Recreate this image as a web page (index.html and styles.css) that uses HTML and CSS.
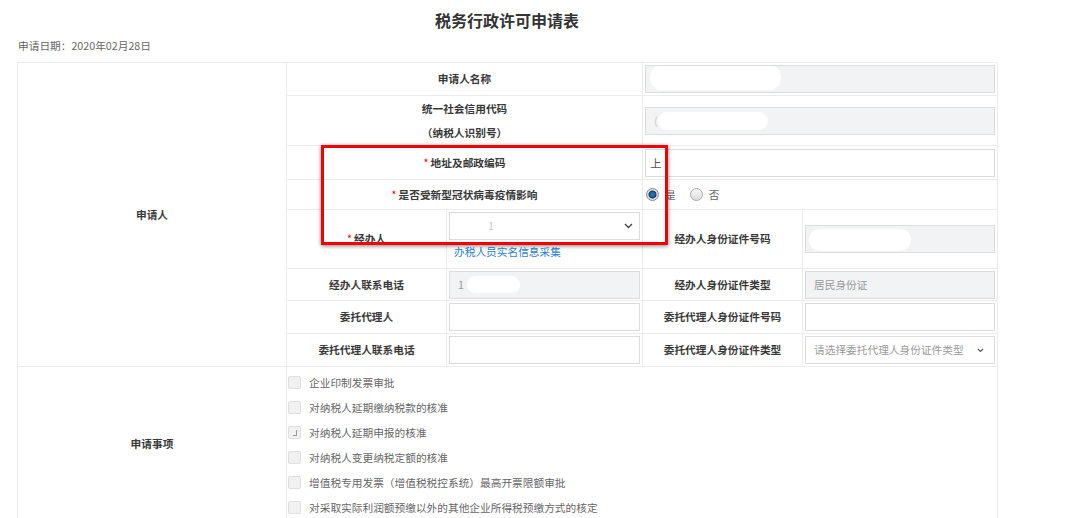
FILE: index.html
```html
<!DOCTYPE html>
<html lang="zh-CN">
<head>
  <meta charset="UTF-8" />
  <title>税务行政许可申请表</title>
  <link rel="stylesheet" href="styles.css">
</head>
<body>

  <div class="page">
    <h1 class="title">税务行政许可申请表</h1>
    <div class="apply-date">申请日期：2020年02月28日</div>

    <div class="form-wrap">
      <table class="form-table">
        <colgroup>
          <col class="c1"><col class="c2"><col class="c3"><col class="c4"><col class="c5">
        </colgroup>

        <!-- 申请人 -->
        <tr class="r1">
          <td class="group" rowspan="8">申请人</td>
          <td class="label" colspan="2">申请人名称</td>
          <td class="field" colspan="2">
            <div class="input readonly"><span class="mask mask-name"></span></div>
          </td>
        </tr>
        <tr class="r2">
          <td class="label two-line" colspan="2">统一社会信用代码<br>（纳税人识别号）</td>
          <td class="field" colspan="2">
            <div class="input readonly"><span class="faint">(</span><span class="mask mask-code"></span></div>
          </td>
        </tr>
        <tr class="r3">
          <td class="label" colspan="2"><span class="req">*</span>地址及邮政编码</td>
          <td class="field" colspan="2">
            <div class="input tight"><span class="value">上</span></div>
          </td>
        </tr>
        <tr class="r4">
          <td class="label" colspan="2"><span class="req">*</span>是否受新型冠状病毒疫情影响</td>
          <td class="field" colspan="2">
            <div class="radio-group">
              <span class="radio on"></span><span class="radio-text">是</span>
              <span class="radio"></span><span class="radio-text">否</span>
            </div>
          </td>
        </tr>
        <tr class="r5">
          <td class="label"><span class="req">*</span>经办人</td>
          <td class="field top">
            <div class="input select"><span class="faint pick">1</span><svg class="chevron" width="9" height="6" viewBox="0 0 9 6"><polyline points="1,1 4.5,4.5 8,1" fill="none" stroke="#444" stroke-width="1.3"/></svg></div>
            <a class="link" href="#">办税人员实名信息采集</a>
          </td>
          <td class="label">经办人身份证件号码</td>
          <td class="field">
            <div class="input readonly"><span class="mask mask-id"></span></div>
          </td>
        </tr>
        <tr class="r6">
          <td class="label">经办人联系电话</td>
          <td class="field">
            <div class="input readonly">1<span class="mask mask-phone"></span></div>
          </td>
          <td class="label">经办人身份证件类型</td>
          <td class="field">
            <div class="input readonly">居民身份证</div>
          </td>
        </tr>
        <tr class="r7">
          <td class="label">委托代理人</td>
          <td class="field"><div class="input"></div></td>
          <td class="label">委托代理人身份证件号码</td>
          <td class="field"><div class="input"></div></td>
        </tr>
        <tr class="r8">
          <td class="label">委托代理人联系电话</td>
          <td class="field"><div class="input"></div></td>
          <td class="label">委托代理人身份证件类型</td>
          <td class="field">
            <div class="input select wide">请选择委托代理人身份证件类型<svg class="chevron" width="7" height="5" viewBox="0 0 7 5"><polyline points="1,1 3.5,3.5 6,1" fill="none" stroke="#555" stroke-width="1.1"/></svg></div>
          </td>
        </tr>

        <!-- 申请事项 -->
        <tr class="r9">
          <td class="group">申请事项</td>
          <td class="field list-cell" colspan="4">
            <ul class="check-list">
              <li><span class="cb"></span>企业印制发票审批</li>
              <li><span class="cb"></span>对纳税人延期缴纳税款的核准</li>
              <li><span class="cb marked"></span>对纳税人延期申报的核准</li>
              <li><span class="cb"></span>对纳税人变更纳税定额的核准</li>
              <li><span class="cb"></span>增值税专用发票（增值税税控系统）最高开票限额审批</li>
              <li><span class="cb"></span>对采取实际利润额预缴以外的其他企业所得税预缴方式的核定</li>
            </ul>
          </td>
        </tr>
      </table>

      <!-- 标注框 -->
      <div class="highlight"></div>
    </div>
  </div>

</body>
</html>
```

FILE: styles.css
```css
* {
  box-sizing: border-box;
}

body {
  margin: 0;
  font-family: "Noto Sans CJK SC", "Liberation Sans", sans-serif;
  font-size: 10.7px;
  color: #333;
  background-color: #fff;
}

.page {
  width: 980px;
  margin-left: 17px;
}

.title {
  margin: 0;
  padding-top: 10px;
  font-size: 16px;
  line-height: 20px;
  font-weight: bold;
  text-align: center;
  color: #333;
}

.apply-date {
  margin-top: 8px;
  padding-left: 1px;
  line-height: 16px;
  color: #666;
}

.form-wrap {
  position: relative;
  margin-top: 8px;
}

.form-table {
  width: 980px;
  border-collapse: collapse;
  table-layout: fixed;
}

.c1 { width: 269px; }
.c2 { width: 160px; }
.c3 { width: 196px; }
.c4 { width: 160px; }
.c5 { width: 195px; }

.form-table td {
  border: 1px solid #ebebeb;
  padding: 1px 2px;
  line-height: 16px;
  vertical-align: middle;
}

.r1 { height: 33px; }
.r2 { height: 50px; }
.r3 { height: 34px; }
.r4 { height: 30px; }
.r5 { height: 59px; }
.r6 { height: 32px; }
.r7 { height: 33px; }
.r8 { height: 33px; }
.r9 { height: 154px; }

.group,
.label {
  text-align: center;
  font-weight: bold;
  color: #3a3a3a;
}

.form-table .two-line {
  padding: 0 2px;
  line-height: 24px;
}

.req {
  color: #f00;
  font-weight: normal;
  margin-right: 2px;
}

.form-table .field.top {
  vertical-align: top;
  padding-top: 2px;
}

/* 输入框 */
.input {
  position: relative;
  height: 28px;
  padding: 0 8px;
  line-height: 26px;
  border: 1px solid #dcdcdc;
  background-color: #fff;
  color: #999;
  white-space: nowrap;
  overflow: hidden;
}

.input.readonly {
  background-color: #f2f3f5;
}

.input.tight {
  padding-left: 4px;
}

.value {
  color: #555;
  font-size: 11.5px;
}

.faint {
  color: #c8c8c8;
}

.pick {
  margin-left: 30px;
}

.select {
  display: flex;
  align-items: center;
  justify-content: space-between;
  padding-right: 6px;
}

.select.wide {
  padding-right: 10px;
}

.chevron {
  flex: none;
}

.link {
  display: block;
  margin-top: 4px;
  padding-left: 5px;
  line-height: 16px;
  color: #2e7fd2;
  text-decoration: none;
}

/* 涂抹遮挡 */
.mask {
  position: absolute;
  background-color: #fff;
  border-radius: 12px;
}

.mask-name { left: 4px; top: -1px; width: 131px; height: 25px; }
.mask-code { left: 12px; top: 4px; width: 110px; height: 18px; border-radius: 9px; }
.mask-id { left: 3px; top: 3px; width: 102px; height: 22px; }
.mask-phone { left: 17px; top: 4px; width: 53px; height: 17px; border-radius: 9px; }

/* 单选 */
.radio-group {
  display: flex;
  align-items: center;
  padding-left: 1px;
  color: #666;
}

.radio {
  width: 13px;
  height: 13px;
  border-radius: 50%;
  border: 1px solid #a9a9a9;
  background: linear-gradient(#f6f6f6, #dcdcdc);
}

.radio.on {
  border-color: #8a8a8a;
  background: radial-gradient(circle, #2a7fc4 0, #1a5f9e 2.5px, #0d3a66 3.5px, #e4e4e4 4.5px, #d6d6d6 6px);
}

.radio-text {
  margin: 0 14px 0 6px;
}

/* 复选 */
.form-table .list-cell {
  padding: 3px 1px 0;
  vertical-align: top;
}

.check-list {
  list-style: none;
  margin: 0;
  padding: 0;
}

.check-list li {
  display: flex;
  align-items: center;
  gap: 8px;
  height: 25px;
  color: #666;
}

.cb {
  flex: none;
  width: 13px;
  height: 13px;
  border: 1px solid #dedede;
  border-radius: 2px;
  background-color: #f1f1f1;
}

.cb.marked::after {
  content: "";
  display: block;
  width: 3px;
  height: 5px;
  margin: 3px 0 0 4px;
  border-right: 1px solid #999;
  border-bottom: 1px solid #999;
}

/* 红色标注框 */
.highlight {
  position: absolute;
  left: 304px;
  top: 83px;
  width: 347px;
  height: 100px;
  border: 3px solid #f20000;
  box-shadow: 0 1px 4px rgba(0, 0, 0, 0.5);
  pointer-events: none;
}
```
